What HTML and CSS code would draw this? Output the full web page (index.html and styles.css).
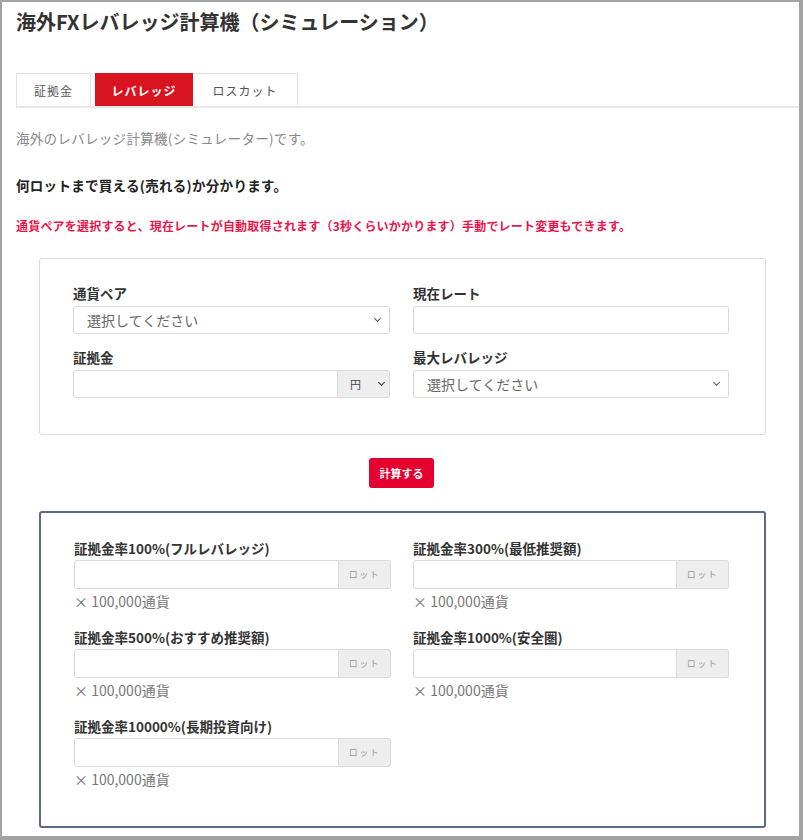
FILE: index.html
```html
<!DOCTYPE html>
<html lang="ja">
<head>
<meta charset="utf-8">
<title>海外FXレバレッジ計算機</title>
<link rel="stylesheet" href="styles.css">
</head>
<body>
<div class="frame">
  <h1 class="title">海外FXレバレッジ計算機（シミュレーション）</h1>
  <div class="tabs">
    <div class="tab">証拠金</div>
    <div class="tab active">レバレッジ</div>
    <div class="tab">ロスカット</div>
  </div>
  <p class="lead">海外のレバレッジ計算機(シミュレーター)です。</p>
  <p class="strong">何ロットまで買える(売れる)か分かります。</p>
  <p class="notice">通貨ペアを選択すると、現在レートが自動取得されます（3秒くらいかかります）手動でレート変更もできます。</p>

  <div class="box inputs">
    <div class="field">
      <div class="label">通貨ペア</div>
      <div class="control select"><span>選択してください</span><span class="caret"></span></div>
    </div>
    <div class="field">
      <div class="label">現在レート</div>
      <div class="control"></div>
    </div>
    <div class="field">
      <div class="label">証拠金</div>
      <div class="group">
        <div class="control flat"></div>
        <div class="addon yen"><span>円</span><span class="caret"></span></div>
      </div>
    </div>
    <div class="field">
      <div class="label">最大レバレッジ</div>
      <div class="control select"><span>選択してください</span><span class="caret"></span></div>
    </div>
  </div>

  <div class="btnrow"><div class="btn">計算する</div></div>

  <div class="box results">
    <div class="field">
      <div class="label">証拠金率100%(フルレバレッジ)</div>
      <div class="group"><div class="control flat"></div><div class="addon lot">ロット</div></div>
      <div class="note">× 100,000通貨</div>
    </div>
    <div class="field">
      <div class="label">証拠金率300%(最低推奨額)</div>
      <div class="group"><div class="control flat"></div><div class="addon lot">ロット</div></div>
      <div class="note">× 100,000通貨</div>
    </div>
    <div class="field">
      <div class="label">証拠金率500%(おすすめ推奨額)</div>
      <div class="group"><div class="control flat"></div><div class="addon lot">ロット</div></div>
      <div class="note">× 100,000通貨</div>
    </div>
    <div class="field">
      <div class="label">証拠金率1000%(安全圏)</div>
      <div class="group"><div class="control flat"></div><div class="addon lot">ロット</div></div>
      <div class="note">× 100,000通貨</div>
    </div>
    <div class="field">
      <div class="label">証拠金率10000%(長期投資向け)</div>
      <div class="group"><div class="control flat"></div><div class="addon lot">ロット</div></div>
      <div class="note">× 100,000通貨</div>
    </div>
  </div>
</div>
</body>
</html>
```

FILE: styles.css
```css
* { box-sizing: border-box; }
html, body { margin: 0; padding: 0; background: #fff; }
body {
  font-family: "Noto Sans CJK JP", "Noto Sans", sans-serif;
  color: #333;
}
.frame {
  width: 803px;
  height: 840px;
  border-top: 2px solid #a3a3a3;
  border-left: 2px solid #a3a3a3;
  border-right: 4px solid #a3a3a3;
  border-bottom: 4px solid #a3a3a3;
  padding: 0 0 0 14px;
  overflow: hidden;
}
.title {
  margin: 0;
  padding-top: 6px;
  height: 34px;
  font-size: 20px;
  line-height: 28px;
  font-weight: 700;
  letter-spacing: 0;
  color: #333;
}
.tabs {
  display: flex;
  margin-top: 37px;
  height: 35px;
  border-bottom: 2px solid #e8e8e8;
}
.tab {
  display: flex;
  align-items: center;
  justify-content: center;
  border: 1px solid #e2e2e2;
  border-bottom: none;
  font-size: 12px;
  color: #555;
  letter-spacing: 1px;
}
.tab:nth-child(1) { width: 75px; margin-right: 4px; }
.tab:nth-child(2) { width: 98px; }
.tab:nth-child(3) { width: 105px; border-left: none; }
.tab.active {
  background: #d7141f;
  border-color: #d7141f;
  color: #fff;
  font-weight: 700;
}
.lead {
  margin: 20px 0 0;
  font-size: 13.5px;
  letter-spacing: 0.3px;
  line-height: 20px;
  color: #888;
}
.strong {
  margin: 27px 0 0;
  font-size: 13.5px;
  letter-spacing: 0.3px;
  line-height: 20px;
  font-weight: 700;
  color: #222;
}
.notice {
  margin: 22px 0 0;
  font-size: 12px;
  letter-spacing: 0.2px;
  line-height: 18px;
  font-weight: 700;
  color: #e8164a;
}
.box {
  width: 727px;
  margin-left: 23px;
  border-radius: 3px;
  display: grid;
  grid-template-columns: 317px 316px;
  column-gap: 23px;
  padding-left: 33px;
}
.inputs {
  margin-top: 23px;
  height: 177px;
  border: 1px solid #dcdcdc;
  padding-top: 24px;
  row-gap: 13px;
  align-content: start;
}
.label {
  font-size: 13.5px;
  line-height: 20px;
  font-weight: 700;
  color: #333;
  margin-bottom: 3px;
  white-space: nowrap;
}
.control {
  height: 28px;
  border: 1px solid #dadada;
  border-radius: 3px;
  background: #fff;
}
.select {
  display: flex;
  align-items: center;
  justify-content: space-between;
  padding: 0 9px 0 13px;
  font-size: 14px;
  color: #666;
}
.caret {
  width: 5px;
  height: 5px;
  border-right: 1.5px solid #555;
  border-bottom: 1.5px solid #555;
  transform: rotate(45deg);
  margin-top: -3px;
}
.group { display: flex; height: 28px; }
.group .control.flat {
  flex: 1;
  border-radius: 3px 0 0 3px;
}
.addon {
  width: 52px;
  height: 28px;
  background: #eee;
  border: 1px solid #dadada;
  border-left: none;
  border-radius: 0 3px 3px 0;
  display: flex;
  align-items: center;
}
.yen {
  justify-content: space-between;
  padding: 0 5px 0 12px;
  font-size: 11px;
  color: #444;
}
.yen .caret { border-color: #333; }
.lot {
  justify-content: center;
  font-size: 9px;
  letter-spacing: 1.5px;
  color: #999;
}
.btnrow {
  display: flex;
  margin-left: 353px;
  margin-top: 23px;
}
.btn {
  width: 65px;
  height: 30px;
  background: #e4002f;
  border-radius: 3px;
  color: #fff;
  font-size: 11px;
  font-weight: 700;
  display: flex;
  align-items: center;
  justify-content: center;
}
.results {
  margin-top: 23px;
  height: 317px;
  border: 2px solid #5a6a8c;
  padding-top: 25px;
  padding-left: 33px;
  column-gap: 22px;
  row-gap: 16px;
  align-content: start;
}
.results .label { margin-bottom: 2px; }
.results .group { height: 29px; }
.results .control, .results .addon { height: 29px; }
.note {
  margin-top: 2px;
  font-size: 14px;
  line-height: 20px;
  color: #777;
}
```
